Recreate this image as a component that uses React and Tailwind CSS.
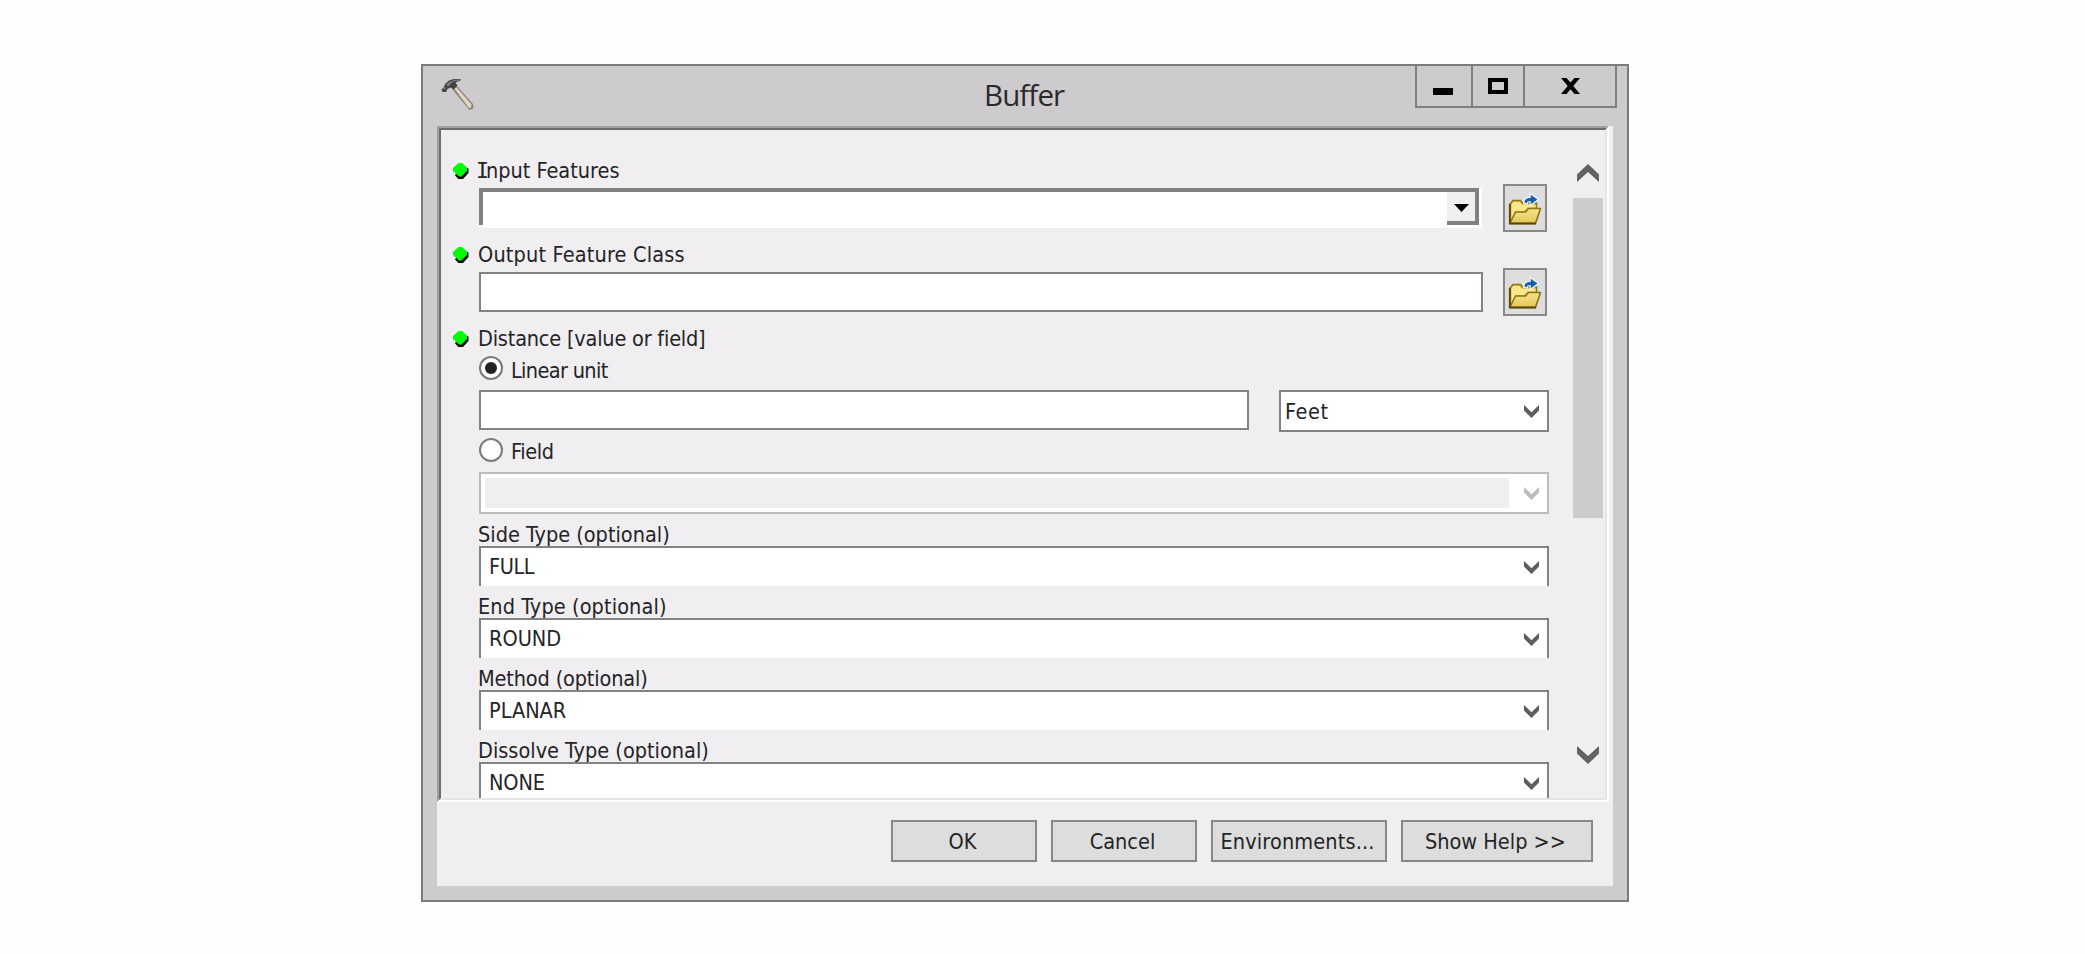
import React from "react";

const SANS = "font-['DejaVu_Sans_Condensed','DejaVu_Sans',sans-serif] [font-stretch:condensed]";

function Chevron({ className = "", up = false, w = 15, h = 13 }) {
  return (
    <svg width={w} height={h} viewBox="0 0 22 18" preserveAspectRatio="none" className={`shrink-0 ${className}`} fill="currentColor">
      {up ? <path d="M0 10.500 L11 0 L22 10.500 V18 L11 8 L0 18 Z" /> : <path d="M0 0 L11 10 L22 0 V7.500 L11 18 L0 7.500 Z" />}
    </svg>
  );
}

function Hammer() {
  return (
    <svg width="34" height="34" viewBox="0 0 34 34" className="shrink-0">
      <path d="M11.500 11.500 L15.500 7.500 L32 26 Q33.300 28.500 31.800 30.800 Q29.500 32.800 27.500 31 Z" fill="#8a837b" />
      <path d="M13.500 10.800 L15.500 9.200 L30.500 26.500 L30 29.500 L28 30 Z" fill="#e2d6c2" />
      <path d="M0.500 11.500 L3 9 L4 6 L8 2.500 L13 1 L20 1.200 L19.500 2.500 L14.500 4.500 L16.500 7.500 L12.500 11.500 L9.500 9.500 L6.500 11 L5 14 L1.500 14 Z" fill="#444445" />
      <path d="M5.500 6.500 L9 3.800 L13 2.800 L9.500 5.500 L7 8.500 Z" fill="#8b8c8d" />
      <path d="M12 2.500 H18" stroke="#77797a" strokeWidth="1.200" />
      <path d="M2.500 11 L4.500 9.500" stroke="#888" strokeWidth="1.200" />
    </svg>
  );
}

function FolderButton() {
  return (
    <button className="flex h-12 w-11 shrink-0 items-center justify-center border-2 border-[#88888a] bg-[#dddddd]">
      <svg width="34" height="34" viewBox="0 0 34 34" fill="none" className="mt-[2px]">
        <defs>
          <linearGradient id="flap" x1="0" y1="0" x2="0" y2="1">
            <stop offset="0" stopColor="#f5e48a" />
            <stop offset="1" stopColor="#e4c658" />
          </linearGradient>
        </defs>
        <path d="M2 12 L5 8.500 L12.500 8.500 L14.500 11 L28.500 11 L28.500 20 L26 31 L2 31 Z" fill="#d9b944" stroke="#94761a" strokeWidth="1.600" />
        <path d="M3.500 12.300 L5.500 10 L11.700 10 L13.700 12.700 H27.500 V15.500 H19 L16 19 H7.500 L3.500 27 Z" fill="#f9e78e" />
        <path d="M2 31 L7.500 20 L17.500 20 L20.500 16.500 L32.500 16.500 L27.500 31.500 H2 Z" fill="url(#flap)" stroke="#8f7118" strokeWidth="1.600" strokeLinejoin="round" />
        <path d="M1.800 12 V31.500 H28" stroke="#5c4605" strokeWidth="1.800" />
        <path d="M16 10 C16 7 18 5.800 22.500 5.800 V2 L30 7.500 L22.500 13 V9.300 H20 C19 9.300 19 10 19 11.500 L16 11 Z" fill="#e6f3fb" stroke="#e6f3fb" strokeWidth="2" />
        <path d="M16.500 10.500 C16.500 7.500 18.500 6 22.800 6 V2.800 L29.500 7.500 L22.800 12.300 V9.200 H20.500 C19.300 9.200 19 10 19 11.200 Z" fill="#1b5fa3" />
      </svg>
    </button>
  );
}

function Label({ children, dot, className = "" }) {
  return (
    <div className="flex h-6 items-center">
      <div className="w-9 shrink-0 pl-[10px]">
        {dot && (
          <svg width="18" height="18" viewBox="0 0 18 18" className="block">
            <path d="M9 3 L16.500 6.500 V11 L11 17 H6.500 L3 13.500 Z" fill="#050a05" />
            <path d="M6.500 1 H10 L15 5.500 V9 L9.500 14.500 H7 L1 9 V6 Z" fill="#00fb08" />
          </svg>
        )}
      </div>
      <span className={`whitespace-pre leading-6 ${className}`}>{children}</span>
    </div>
  );
}

function Radio({ checked, children, className = "" }) {
  return (
    <div className="flex h-6 pl-[37px]">
      <div className="flex h-6 w-6 shrink-0 items-center justify-center rounded-full border-2 border-[#7b7b7c] bg-white">
        {checked && <div className="h-3 w-3 rounded-full bg-[#222222]" />}
      </div>
      <span className={`ml-2 whitespace-pre leading-6 ${className}`}>{children}</span>
    </div>
  );
}

function OptionalSelect({ label, value, labelClass = "", valueClass = "" }) {
  return (
    <div className="shrink-0">
      <div className="h-8 pt-[9px]">
        <Label className={labelClass}>{label}</Label>
      </div>
      <div className="ml-[37px] flex h-10 w-[1070px] justify-between border-x-2 border-t-2 border-[#828283] bg-white pl-2 pr-[8px]">
        <span className={`mt-[7px] whitespace-pre leading-6 ${valueClass}`}>{value}</span>
        <Chevron className="mt-[13px] text-[#5d5d5e]" />
      </div>
    </div>
  );
}

function PushButton({ children, className = "", textClass = "" }) {
  return (
    <button className={`flex h-[42px] items-center justify-center border-2 border-[#88888a] bg-[#dddddd] pr-[3px] pt-[2px] ${className}`}>
      <span className={`whitespace-pre leading-6 ${textClass}`}>{children}</span>
    </button>
  );
}

function TitleBar() {
  return (
    <div className="flex h-[60px] items-start">
      <div className="w-[561px] pl-[18px] pt-[12px]">
        <Hammer />
      </div>
      <h1 className="w-[431px] whitespace-pre pt-[9px] font-['Open_Sans',sans-serif] text-[29.5px] leading-[40px] tracking-[-0.9px] text-[#2a2a2b] [font-stretch:normal]">Buffer</h1>
      <div className="flex h-[42px] w-[202px] border-x-2 border-b-2 border-[#7f8083] bg-[#cccccd]">
        <div className="flex w-14 justify-center border-r-2 border-[#7f8083] pr-[2px] pt-[22px]">
          <div className="h-[7px] w-5 bg-black" />
        </div>
        <div className="flex w-[52px] justify-center border-r-2 border-[#7f8083] pt-3">
          <div className="h-4 w-5 border-4 border-black" />
        </div>
        <div className="flex flex-1 justify-center pt-3">
          <svg width="19" height="16" viewBox="0 0 19 16">
            <path d="M0 0 H5.500 L9.500 4.500 L13.500 0 H19 L12.300 8 L19 16 H13.500 L9.500 11.300 L5.500 16 H0 L6.700 8 Z" />
          </svg>
        </div>
      </div>
    </div>
  );
}

export default function App() {
  return (
    <div className={`h-[954px] w-[2085px] overflow-hidden bg-[#fdfefe] pl-[421px] pt-16 text-[21.5px] text-[#242426] ${SANS}`}>
      <div className="h-[838px] w-[1208px] border-2 border-[#7b7c7d] bg-[#cdcbce]">
        <TitleBar />
        <div className="ml-[14px] h-[760px] w-[1176px] bg-[#f0eef1]">
          <div className="h-[676px] w-[1172px] border-2 border-b-white border-l-[#a0a0a1] border-r-white border-t-[#a0a0a1]">
            <div className="flex h-full border-2 border-b-[#e5e4e6] border-l-[#6d6d6f] border-r-[#e5e4e6] border-t-[#6d6d6f]">
              <div className="flex h-[668px] w-[1132px] shrink-0 flex-col overflow-hidden pl-px">
                <div className="h-[54px] shrink-0 pt-[29px]">
                  <Label dot>
                    <span className="-ml-[2px] -mr-[3px] font-['DejaVu_Sans_Mono',monospace] [font-stretch:normal]">I</span>nput Features
                  </Label>
                </div>
                <div className="flex h-12 shrink-0 items-center pl-[37px]">
                  <div className="mr-[21px] flex h-10 w-[1003px] border-b-[3px] border-r-[3px] border-white bg-white">
                    <div className="flex w-full justify-end border-l-4 border-t-4 border-[#808081]">
                      <div className="flex h-[33px] w-8 items-center justify-center border-b-4 border-r-4 border-[#808081] bg-[#f0f0f0] pt-[2px]">
                        <svg width="15" height="8" viewBox="0 0 15 8">
                          <path d="M0 0 H15 L7.500 8 Z" />
                        </svg>
                      </div>
                    </div>
                  </div>
                  <FolderButton />
                </div>
                <div className="h-9 shrink-0 pt-[11px]">
                  <Label dot className="tracking-[0.17px]">Output Feature Class</Label>
                </div>
                <div className="flex h-12 shrink-0 items-center pl-[37px]">
                  <div className="mr-5 h-10 w-[1004px] border-2 border-[#828283] bg-white" />
                  <FolderButton />
                </div>
                <div className="h-10 shrink-0 pt-[11px]">
                  <Label dot className="tracking-[-0.2px]">Distance [value or field]</Label>
                </div>
                <div className="h-[34px] shrink-0">
                  <Radio checked className="mt-[3px] tracking-[-0.65px]">Linear unit</Radio>
                </div>
                <div className="flex h-[42px] shrink-0 items-start pl-[37px]">
                  <div className="mr-[30px] h-10 w-[770px] border-2 border-[#828283] bg-white" />
                  <div className="flex h-[42px] w-[270px] justify-between border-2 border-[#828283] bg-white pl-[4px] pr-[8px]">
                    <span className="mt-[8px] leading-6 tracking-[0.6px]">Feet</span>
                    <Chevron className="mt-[13px] text-[#5d5d5e]" />
                  </div>
                </div>
                <div className="h-10 shrink-0 pt-[6px]">
                  <Radio className="mt-[2px] tracking-[-0.35px]">Field</Radio>
                </div>
                <div className="ml-[37px] flex h-[42px] w-[1070px] shrink-0 justify-between border-2 border-[#bcbcbf] bg-white p-1 pr-[8px]">
                  <div className="h-[30px] w-[1024px] bg-[#f0eef1]" />
                  <Chevron className="mt-[9px] text-[#bcbcbe]" />
                </div>
                <OptionalSelect label="Side Type (optional)" value="FULL" valueClass="tracking-[-0.45px]" />
                <OptionalSelect label="End Type (optional)" value="ROUND" labelClass="tracking-[0.1px]" />
                <OptionalSelect label="Method (optional)" value="PLANAR" labelClass="tracking-[-0.15px]" />
                <OptionalSelect label="Dissolve Type (optional)" value="NONE" valueClass="tracking-[-0.15px]" />
              </div>
              <div className="flex w-[30px] shrink-0 flex-col items-center">
                <Chevron up w={22} h={18} className="mt-[34px] text-[#636364]" />
                <div className="mt-4 h-80 w-full bg-[#cdcbce]" />
                <Chevron w={22} h={18} className="mt-[228px] text-[#636364]" />
              </div>
            </div>
          </div>
          <div className="flex gap-[14px] pl-[454px] pt-[18px]">
            <PushButton className="w-[146px]">OK</PushButton>
            <PushButton className="w-[146px]">Cancel</PushButton>
            <PushButton className="w-[176px]" textClass="tracking-[0.15px]">Environments...</PushButton>
            <PushButton className="w-[192px]">Show Help &gt;&gt;</PushButton>
          </div>
        </div>
      </div>
    </div>
  );
}
